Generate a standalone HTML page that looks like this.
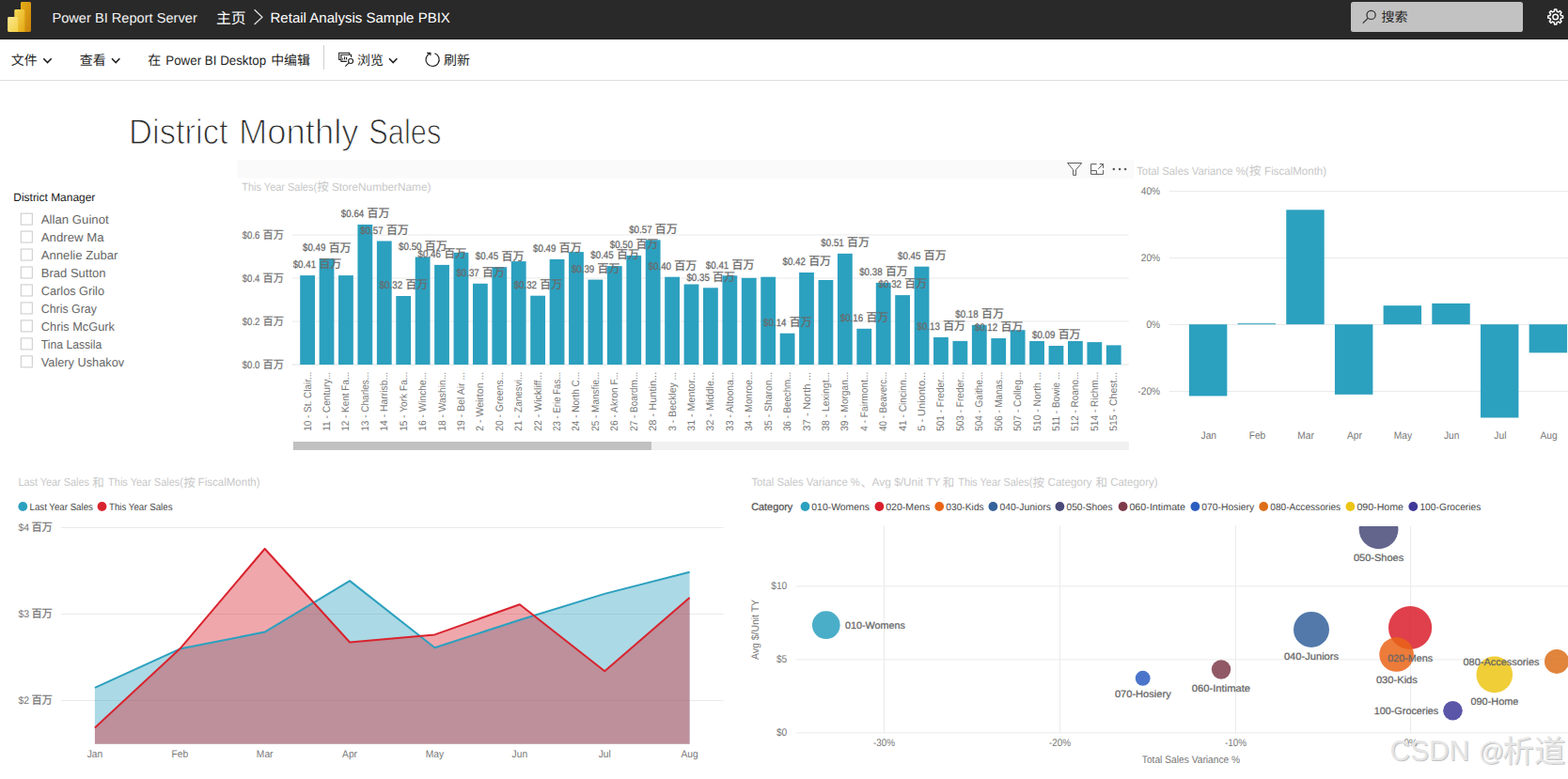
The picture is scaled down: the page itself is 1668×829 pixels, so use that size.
<!DOCTYPE html>
<html lang="zh-CN">
<head>
<meta charset="utf-8">
<title>Retail Analysis Sample PBIX - Power BI Report Server</title>
<style>
html,body{margin:0;padding:0;background:#ffffff;}
body{width:1668px;height:829px;overflow:hidden;position:relative;font-family:"Liberation Sans","Noto Sans CJK SC",sans-serif;}
svg#page{position:absolute;left:0;top:0;display:block;}
svg#page text{font-family:"Liberation Sans","Noto Sans CJK SC",sans-serif;white-space:pre;text-rendering:geometricPrecision;}
</style>
</head>
<body>
<svg id="page" width="1668" height="829" viewBox="0 0 1668 829">
<g id="header">
<rect x="0" y="0" width="1668" height="42" fill="#292929"/><rect x="0" y="41" width="1668" height="1" fill="#202020"/>
<defs>
<linearGradient id="lg1" x1="0" y1="0" x2="1" y2="1"><stop offset="0" stop-color="#e8b017"/><stop offset="1" stop-color="#c7800d"/></linearGradient>
<linearGradient id="lg2" x1="0" y1="0" x2="1" y2="1"><stop offset="0" stop-color="#f8da58"/><stop offset="1" stop-color="#e3a812"/></linearGradient>
<linearGradient id="lg3" x1="0" y1="0" x2="1" y2="1"><stop offset="0" stop-color="#fae98f"/><stop offset="1" stop-color="#f3cf45"/></linearGradient>
</defs>
<rect x="22" y="2" width="11" height="31.9" rx="1.4" fill="url(#lg1)"/>
<path d="M15.3 11.4a1.4 1.4 0 0 1 1.4-1.4h8.2a1.4 1.4 0 0 1 1.4 1.4V33.9H15.3z" fill="url(#lg2)"/>
<path d="M8.1 19.4a1.4 1.4 0 0 1 1.4-1.4h8.2a1.4 1.4 0 0 1 1.4 1.4V33.9H9.5a1.4 1.4 0 0 1-1.4-1.4z" fill="url(#lg3)"/>
<text x="55.40" y="23.70" font-size="14.5" fill="#f2f2f2" textLength="154.40" lengthAdjust="spacingAndGlyphs">Power BI Report Server</text>
<text x="230.00" y="24.60" font-size="16" fill="#ffffff" textLength="31.70" lengthAdjust="spacingAndGlyphs">主页</text>
<path d="M270.6 10.3 L279 18.2 L270.6 26" fill="none" stroke="#e6e6e6" stroke-width="1.2"/>
<text x="287.50" y="23.50" font-size="15" fill="#ffffff" textLength="191.40" lengthAdjust="spacingAndGlyphs">Retail Analysis Sample PBIX</text>
<rect x="1437" y="2" width="183" height="32" rx="2.5" fill="#c2c2c2"/>
<circle cx="1458.6" cy="15.9" r="4.6" fill="none" stroke="#2b2b2b" stroke-width="1.2"/><path d="M1455.2 19.3 L1449.8 24.7" stroke="#2b2b2b" stroke-width="1.2" fill="none"/>
<text x="1469.50" y="23.30" font-size="14" fill="#262626" textLength="28.00" lengthAdjust="spacingAndGlyphs">搜索</text>
<path d="M1653.30 12.17 L1653.57 10.08 L1655.83 10.08 L1656.10 12.17 L1657.83 12.88 L1659.50 11.60 L1661.10 13.20 L1659.82 14.87 L1660.53 16.60 L1662.62 16.87 L1662.62 19.13 L1660.53 19.40 L1659.82 21.13 L1661.10 22.80 L1659.50 24.40 L1657.83 23.12 L1656.10 23.83 L1655.83 25.92 L1653.57 25.92 L1653.30 23.83 L1651.57 23.12 L1649.90 24.40 L1648.30 22.80 L1649.58 21.13 L1648.87 19.40 L1646.78 19.13 L1646.78 16.87 L1648.87 16.60 L1649.58 14.87 L1648.30 13.20 L1649.90 11.60 L1651.57 12.88Z" fill="none" stroke="#fff" stroke-width="1.5" stroke-linejoin="round"/><circle cx="1654.70" cy="18.00" r="2.80" fill="none" stroke="#fff" stroke-width="1.5"/>
</g>
<g id="toolbar">
<rect x="0" y="85" width="1668" height="1" fill="#dedede"/>
<text x="11.70" y="69.20" font-size="14" fill="#1f1f1f" textLength="27.90" lengthAdjust="spacingAndGlyphs">文件</text>
<path d="M46.30 62.30 L50.50 66.50 L54.70 62.30" fill="none" stroke="#1f1f1f" stroke-width="1.6"/>
<text x="84.70" y="69.20" font-size="14" fill="#1f1f1f" textLength="27.90" lengthAdjust="spacingAndGlyphs">查看</text>
<path d="M119.00 62.30 L123.20 66.50 L127.40 62.30" fill="none" stroke="#1f1f1f" stroke-width="1.6"/>
<text x="157.30" y="69.20" font-size="14" fill="#1f1f1f">在</text>
<text x="176.30" y="68.80" font-size="14" fill="#1f1f1f" textLength="106.80" lengthAdjust="spacingAndGlyphs">Power BI Desktop</text>
<text x="288.20" y="69.20" font-size="14" fill="#1f1f1f" textLength="41.80" lengthAdjust="spacingAndGlyphs">中编辑</text>
<rect x="344" y="48" width="1" height="26" fill="#cfcfcf"/>
<g fill="none" stroke="#1f1f1f" stroke-width="1.1"><path d="M371.7 58V56.3H360.7V63.5H362.7"/><path d="M373.6 60.9V58.3H362.9V65.4H368.9"/><path d="M364.6 63.6V62.3M366.6 63.6V60.2M368.6 63.6V61"/><circle cx="373.1" cy="65" r="2.5"/><path d="M371.2 66.8 L367.3 70.7"/></g>
<text x="380.00" y="69.20" font-size="14" fill="#1f1f1f" textLength="27.90" lengthAdjust="spacingAndGlyphs">浏览</text>
<path d="M414.00 62.30 L418.20 66.50 L422.40 62.30" fill="none" stroke="#1f1f1f" stroke-width="1.6"/>
<g fill="none" stroke="#1f1f1f" stroke-width="1.2"><path d="M462.4 56.7 A7.1 7.1 0 1 1 457.3 56.9"/><path d="M454.2 56.4 H457.9 V59.0"/></g>
<text x="472.00" y="69.20" font-size="14" fill="#1f1f1f" textLength="27.90" lengthAdjust="spacingAndGlyphs">刷新</text>
</g>
<g id="title">
<text x="137.10" y="153.20" font-size="37.5" fill="#2a2a2a" textLength="105.60" lengthAdjust="spacingAndGlyphs" stroke="#fff" stroke-width="1.1" paint-order="fill stroke">District</text>
<text x="254.00" y="153.20" font-size="37.5" fill="#2a2a2a" textLength="127.50" lengthAdjust="spacingAndGlyphs" stroke="#fff" stroke-width="1.1" paint-order="fill stroke">Monthly</text>
<text x="392.30" y="153.20" font-size="37.5" fill="#2a2a2a" textLength="77.00" lengthAdjust="spacingAndGlyphs" stroke="#fff" stroke-width="1.1" paint-order="fill stroke">Sales</text>
</g>
<g id="slicer">
<text x="14.30" y="214.00" font-size="12" fill="#1a1a1a" textLength="87.00" lengthAdjust="spacingAndGlyphs">District Manager</text>
<rect x="22.3" y="227.10" width="12" height="12" fill="#fff" stroke="#c9c9c9" stroke-width="1"/>
<text x="43.80" y="237.90" font-size="13" fill="#666666" textLength="71.90" lengthAdjust="spacingAndGlyphs">Allan Guinot</text>
<rect x="22.3" y="246.07" width="12" height="12" fill="#fff" stroke="#c9c9c9" stroke-width="1"/>
<text x="43.80" y="256.87" font-size="13" fill="#666666" textLength="66.70" lengthAdjust="spacingAndGlyphs">Andrew Ma</text>
<rect x="22.3" y="265.04" width="12" height="12" fill="#fff" stroke="#c9c9c9" stroke-width="1"/>
<text x="43.80" y="275.84" font-size="13" fill="#666666" textLength="81.60" lengthAdjust="spacingAndGlyphs">Annelie Zubar</text>
<rect x="22.3" y="284.01" width="12" height="12" fill="#fff" stroke="#c9c9c9" stroke-width="1"/>
<text x="43.80" y="294.81" font-size="13" fill="#666666" textLength="68.70" lengthAdjust="spacingAndGlyphs">Brad Sutton</text>
<rect x="22.3" y="302.98" width="12" height="12" fill="#fff" stroke="#c9c9c9" stroke-width="1"/>
<text x="43.80" y="313.78" font-size="13" fill="#666666" textLength="67.20" lengthAdjust="spacingAndGlyphs">Carlos Grilo</text>
<rect x="22.3" y="321.95" width="12" height="12" fill="#fff" stroke="#c9c9c9" stroke-width="1"/>
<text x="43.80" y="332.75" font-size="13" fill="#666666" textLength="59.10" lengthAdjust="spacingAndGlyphs">Chris Gray</text>
<rect x="22.3" y="340.92" width="12" height="12" fill="#fff" stroke="#c9c9c9" stroke-width="1"/>
<text x="43.80" y="351.72" font-size="13" fill="#666666" textLength="78.10" lengthAdjust="spacingAndGlyphs">Chris McGurk</text>
<rect x="22.3" y="359.89" width="12" height="12" fill="#fff" stroke="#c9c9c9" stroke-width="1"/>
<text x="43.80" y="370.69" font-size="13" fill="#666666" textLength="64.50" lengthAdjust="spacingAndGlyphs">Tina Lassila</text>
<rect x="22.3" y="378.86" width="12" height="12" fill="#fff" stroke="#c9c9c9" stroke-width="1"/>
<text x="43.80" y="389.66" font-size="13" fill="#666666" textLength="88.30" lengthAdjust="spacingAndGlyphs">Valery Ushakov</text>
</g>
<g id="barchart">
<rect x="252.3" y="170" width="953.6" height="19.8" fill="#fafafa"/>
<g fill="none" stroke="#5a5a5a" stroke-width="1.0"><path d="M1135.6 173.5H1150.7L1144.6 180.6V186.4H1141.6V180.6Z"/><path d="M1166.6 174.6H1160.6V185.4H1173.6V181.1"/><path d="M1160.6 181.6H1166.4V185.4"/><path d="M1168.3 179.8 L1173.4 174.7 M1169.7 174.6H1173.6V178.9"/></g>
<g fill="#5a5a5a"><circle cx="1184.8" cy="179.9" r="1.25"/><circle cx="1191.1" cy="179.9" r="1.25"/><circle cx="1197.1" cy="179.9" r="1.25"/></g>
<text x="257.30" y="202.70" font-size="12" fill="#c8c8c8" textLength="79.80" lengthAdjust="spacingAndGlyphs">This Year Sales(</text>
<text x="337.32" y="203.40" font-size="12.5" fill="#c8c8c8">按</text>
<text x="352.90" y="202.70" font-size="12" fill="#c8c8c8" textLength="105.50" lengthAdjust="spacingAndGlyphs">StoreNumberName)</text>
<rect x="310.8" y="387.50" width="890" height="1" fill="#e2e2e2"/>
<text x="257.80" y="391.90" font-size="11" fill="#777777" textLength="18.60" lengthAdjust="spacingAndGlyphs" stroke="#777777" stroke-width="0.2">$0.0</text>
<text x="279.50" y="391.80" font-size="11.8" fill="#777777" stroke="#777777" stroke-width="0.25" textLength="22.40" lengthAdjust="spacingAndGlyphs">百万</text>
<rect x="310.8" y="341.50" width="890" height="1" fill="#eaeaea"/>
<text x="257.80" y="345.90" font-size="11" fill="#777777" textLength="18.60" lengthAdjust="spacingAndGlyphs" stroke="#777777" stroke-width="0.2">$0.2</text>
<text x="279.50" y="345.80" font-size="11.8" fill="#777777" stroke="#777777" stroke-width="0.25" textLength="22.40" lengthAdjust="spacingAndGlyphs">百万</text>
<rect x="310.8" y="295.50" width="890" height="1" fill="#eaeaea"/>
<text x="257.80" y="299.90" font-size="11" fill="#777777" textLength="18.60" lengthAdjust="spacingAndGlyphs" stroke="#777777" stroke-width="0.2">$0.4</text>
<text x="279.50" y="299.80" font-size="11.8" fill="#777777" stroke="#777777" stroke-width="0.25" textLength="22.40" lengthAdjust="spacingAndGlyphs">百万</text>
<rect x="310.8" y="249.50" width="890" height="1" fill="#eaeaea"/>
<text x="257.80" y="253.90" font-size="11" fill="#777777" textLength="18.60" lengthAdjust="spacingAndGlyphs" stroke="#777777" stroke-width="0.2">$0.6</text>
<text x="279.50" y="253.80" font-size="11.8" fill="#777777" stroke="#777777" stroke-width="0.25" textLength="22.40" lengthAdjust="spacingAndGlyphs">百万</text>
<g fill="#2ca0bf">
<rect x="319.20" y="293.10" width="15.80" height="94.90"/>
<rect x="339.62" y="275.20" width="15.80" height="112.80"/>
<rect x="360.04" y="293.10" width="15.80" height="94.90"/>
<rect x="380.46" y="239.00" width="15.80" height="149.00"/>
<rect x="400.88" y="256.50" width="15.80" height="131.50"/>
<rect x="421.30" y="315.00" width="15.80" height="73.00"/>
<rect x="441.72" y="273.50" width="15.80" height="114.50"/>
<rect x="462.14" y="281.90" width="15.80" height="106.10"/>
<rect x="482.56" y="268.80" width="15.80" height="119.20"/>
<rect x="502.98" y="301.80" width="15.80" height="86.20"/>
<rect x="523.40" y="284.20" width="15.80" height="103.80"/>
<rect x="543.82" y="278.10" width="15.80" height="109.90"/>
<rect x="564.24" y="314.70" width="15.80" height="73.30"/>
<rect x="584.66" y="275.90" width="15.80" height="112.10"/>
<rect x="605.08" y="268.10" width="15.80" height="119.90"/>
<rect x="625.50" y="297.60" width="15.80" height="90.40"/>
<rect x="645.92" y="283.10" width="15.80" height="104.90"/>
<rect x="666.34" y="271.90" width="15.80" height="116.10"/>
<rect x="686.76" y="255.40" width="15.80" height="132.60"/>
<rect x="707.18" y="294.70" width="15.80" height="93.30"/>
<rect x="727.60" y="302.50" width="15.80" height="85.50"/>
<rect x="748.02" y="306.30" width="15.80" height="81.70"/>
<rect x="768.44" y="293.30" width="15.80" height="94.70"/>
<rect x="788.86" y="295.80" width="15.80" height="92.20"/>
<rect x="809.28" y="294.70" width="15.80" height="93.30"/>
<rect x="829.70" y="354.70" width="15.80" height="33.30"/>
<rect x="850.12" y="290.00" width="15.80" height="98.00"/>
<rect x="870.54" y="298.00" width="15.80" height="90.00"/>
<rect x="890.96" y="269.90" width="15.80" height="118.10"/>
<rect x="911.38" y="349.80" width="15.80" height="38.20"/>
<rect x="931.80" y="300.90" width="15.80" height="87.10"/>
<rect x="952.22" y="314.10" width="15.80" height="73.90"/>
<rect x="972.64" y="283.70" width="15.80" height="104.30"/>
<rect x="993.06" y="358.90" width="15.80" height="29.10"/>
<rect x="1013.48" y="362.90" width="15.80" height="25.10"/>
<rect x="1033.90" y="345.80" width="15.80" height="42.20"/>
<rect x="1054.32" y="360.00" width="15.80" height="28.00"/>
<rect x="1074.74" y="351.20" width="15.80" height="36.80"/>
<rect x="1095.16" y="363.00" width="15.80" height="25.00"/>
<rect x="1115.58" y="368.00" width="15.80" height="20.00"/>
<rect x="1136.00" y="363.00" width="15.80" height="25.00"/>
<rect x="1156.42" y="364.10" width="15.80" height="23.90"/>
<rect x="1176.84" y="367.40" width="15.80" height="20.60"/>
</g>
<text x="311.70" y="285.30" font-size="11" fill="#6a6a6a" textLength="24.40" lengthAdjust="spacingAndGlyphs" stroke="#6a6a6a" stroke-width="0.25">$0.41</text>
<text x="339.40" y="285.40" font-size="12.5" fill="#6a6a6a" stroke="#6a6a6a" stroke-width="0.3" textLength="23.80" lengthAdjust="spacingAndGlyphs">百万</text>
<text x="322.02" y="267.40" font-size="11" fill="#6a6a6a" textLength="24.40" lengthAdjust="spacingAndGlyphs" stroke="#6a6a6a" stroke-width="0.25">$0.49</text>
<text x="349.72" y="267.50" font-size="12.5" fill="#6a6a6a" stroke="#6a6a6a" stroke-width="0.3" textLength="23.80" lengthAdjust="spacingAndGlyphs">百万</text>
<text x="362.86" y="231.20" font-size="11" fill="#6a6a6a" textLength="24.40" lengthAdjust="spacingAndGlyphs" stroke="#6a6a6a" stroke-width="0.25">$0.64</text>
<text x="390.56" y="231.30" font-size="12.5" fill="#6a6a6a" stroke="#6a6a6a" stroke-width="0.3" textLength="23.80" lengthAdjust="spacingAndGlyphs">百万</text>
<text x="383.28" y="248.70" font-size="11" fill="#6a6a6a" textLength="24.40" lengthAdjust="spacingAndGlyphs" stroke="#6a6a6a" stroke-width="0.25">$0.57</text>
<text x="410.98" y="248.80" font-size="12.5" fill="#6a6a6a" stroke="#6a6a6a" stroke-width="0.3" textLength="23.80" lengthAdjust="spacingAndGlyphs">百万</text>
<text x="403.70" y="307.20" font-size="11" fill="#6a6a6a" textLength="24.40" lengthAdjust="spacingAndGlyphs" stroke="#6a6a6a" stroke-width="0.25">$0.32</text>
<text x="431.40" y="307.30" font-size="12.5" fill="#6a6a6a" stroke="#6a6a6a" stroke-width="0.3" textLength="23.80" lengthAdjust="spacingAndGlyphs">百万</text>
<text x="424.12" y="265.70" font-size="11" fill="#6a6a6a" textLength="24.40" lengthAdjust="spacingAndGlyphs" stroke="#6a6a6a" stroke-width="0.25">$0.50</text>
<text x="451.82" y="265.80" font-size="12.5" fill="#6a6a6a" stroke="#6a6a6a" stroke-width="0.3" textLength="23.80" lengthAdjust="spacingAndGlyphs">百万</text>
<text x="444.54" y="274.10" font-size="11" fill="#6a6a6a" textLength="24.40" lengthAdjust="spacingAndGlyphs" stroke="#6a6a6a" stroke-width="0.25">$0.46</text>
<text x="472.24" y="274.20" font-size="12.5" fill="#6a6a6a" stroke="#6a6a6a" stroke-width="0.3" textLength="23.80" lengthAdjust="spacingAndGlyphs">百万</text>
<text x="485.38" y="294.00" font-size="11" fill="#6a6a6a" textLength="24.40" lengthAdjust="spacingAndGlyphs" stroke="#6a6a6a" stroke-width="0.25">$0.37</text>
<text x="513.08" y="294.10" font-size="12.5" fill="#6a6a6a" stroke="#6a6a6a" stroke-width="0.3" textLength="23.80" lengthAdjust="spacingAndGlyphs">百万</text>
<text x="505.80" y="276.40" font-size="11" fill="#6a6a6a" textLength="24.40" lengthAdjust="spacingAndGlyphs" stroke="#6a6a6a" stroke-width="0.25">$0.45</text>
<text x="533.50" y="276.50" font-size="12.5" fill="#6a6a6a" stroke="#6a6a6a" stroke-width="0.3" textLength="23.80" lengthAdjust="spacingAndGlyphs">百万</text>
<text x="546.64" y="306.90" font-size="11" fill="#6a6a6a" textLength="24.40" lengthAdjust="spacingAndGlyphs" stroke="#6a6a6a" stroke-width="0.25">$0.32</text>
<text x="574.34" y="307.00" font-size="12.5" fill="#6a6a6a" stroke="#6a6a6a" stroke-width="0.3" textLength="23.80" lengthAdjust="spacingAndGlyphs">百万</text>
<text x="567.06" y="268.10" font-size="11" fill="#6a6a6a" textLength="24.40" lengthAdjust="spacingAndGlyphs" stroke="#6a6a6a" stroke-width="0.25">$0.49</text>
<text x="594.76" y="268.20" font-size="12.5" fill="#6a6a6a" stroke="#6a6a6a" stroke-width="0.3" textLength="23.80" lengthAdjust="spacingAndGlyphs">百万</text>
<text x="607.90" y="289.80" font-size="11" fill="#6a6a6a" textLength="24.40" lengthAdjust="spacingAndGlyphs" stroke="#6a6a6a" stroke-width="0.25">$0.39</text>
<text x="635.60" y="289.90" font-size="12.5" fill="#6a6a6a" stroke="#6a6a6a" stroke-width="0.3" textLength="23.80" lengthAdjust="spacingAndGlyphs">百万</text>
<text x="628.32" y="275.30" font-size="11" fill="#6a6a6a" textLength="24.40" lengthAdjust="spacingAndGlyphs" stroke="#6a6a6a" stroke-width="0.25">$0.45</text>
<text x="656.02" y="275.40" font-size="12.5" fill="#6a6a6a" stroke="#6a6a6a" stroke-width="0.3" textLength="23.80" lengthAdjust="spacingAndGlyphs">百万</text>
<text x="648.74" y="264.10" font-size="11" fill="#6a6a6a" textLength="24.40" lengthAdjust="spacingAndGlyphs" stroke="#6a6a6a" stroke-width="0.25">$0.50</text>
<text x="676.44" y="264.20" font-size="12.5" fill="#6a6a6a" stroke="#6a6a6a" stroke-width="0.3" textLength="23.80" lengthAdjust="spacingAndGlyphs">百万</text>
<text x="669.16" y="247.60" font-size="11" fill="#6a6a6a" textLength="24.40" lengthAdjust="spacingAndGlyphs" stroke="#6a6a6a" stroke-width="0.25">$0.57</text>
<text x="696.86" y="247.70" font-size="12.5" fill="#6a6a6a" stroke="#6a6a6a" stroke-width="0.3" textLength="23.80" lengthAdjust="spacingAndGlyphs">百万</text>
<text x="689.58" y="286.90" font-size="11" fill="#6a6a6a" textLength="24.40" lengthAdjust="spacingAndGlyphs" stroke="#6a6a6a" stroke-width="0.25">$0.40</text>
<text x="717.28" y="287.00" font-size="12.5" fill="#6a6a6a" stroke="#6a6a6a" stroke-width="0.3" textLength="23.80" lengthAdjust="spacingAndGlyphs">百万</text>
<text x="730.42" y="298.50" font-size="11" fill="#6a6a6a" textLength="24.40" lengthAdjust="spacingAndGlyphs" stroke="#6a6a6a" stroke-width="0.25">$0.35</text>
<text x="758.12" y="298.60" font-size="12.5" fill="#6a6a6a" stroke="#6a6a6a" stroke-width="0.3" textLength="23.80" lengthAdjust="spacingAndGlyphs">百万</text>
<text x="750.84" y="285.50" font-size="11" fill="#6a6a6a" textLength="24.40" lengthAdjust="spacingAndGlyphs" stroke="#6a6a6a" stroke-width="0.25">$0.41</text>
<text x="778.54" y="285.60" font-size="12.5" fill="#6a6a6a" stroke="#6a6a6a" stroke-width="0.3" textLength="23.80" lengthAdjust="spacingAndGlyphs">百万</text>
<text x="812.10" y="346.90" font-size="11" fill="#6a6a6a" textLength="24.40" lengthAdjust="spacingAndGlyphs" stroke="#6a6a6a" stroke-width="0.25">$0.14</text>
<text x="839.80" y="347.00" font-size="12.5" fill="#6a6a6a" stroke="#6a6a6a" stroke-width="0.3" textLength="23.80" lengthAdjust="spacingAndGlyphs">百万</text>
<text x="832.52" y="282.20" font-size="11" fill="#6a6a6a" textLength="24.40" lengthAdjust="spacingAndGlyphs" stroke="#6a6a6a" stroke-width="0.25">$0.42</text>
<text x="860.22" y="282.30" font-size="12.5" fill="#6a6a6a" stroke="#6a6a6a" stroke-width="0.3" textLength="23.80" lengthAdjust="spacingAndGlyphs">百万</text>
<text x="873.36" y="262.10" font-size="11" fill="#6a6a6a" textLength="24.40" lengthAdjust="spacingAndGlyphs" stroke="#6a6a6a" stroke-width="0.25">$0.51</text>
<text x="901.06" y="262.20" font-size="12.5" fill="#6a6a6a" stroke="#6a6a6a" stroke-width="0.3" textLength="23.80" lengthAdjust="spacingAndGlyphs">百万</text>
<text x="893.78" y="342.00" font-size="11" fill="#6a6a6a" textLength="24.40" lengthAdjust="spacingAndGlyphs" stroke="#6a6a6a" stroke-width="0.25">$0.16</text>
<text x="921.48" y="342.10" font-size="12.5" fill="#6a6a6a" stroke="#6a6a6a" stroke-width="0.3" textLength="23.80" lengthAdjust="spacingAndGlyphs">百万</text>
<text x="914.20" y="293.10" font-size="11" fill="#6a6a6a" textLength="24.40" lengthAdjust="spacingAndGlyphs" stroke="#6a6a6a" stroke-width="0.25">$0.38</text>
<text x="941.90" y="293.20" font-size="12.5" fill="#6a6a6a" stroke="#6a6a6a" stroke-width="0.3" textLength="23.80" lengthAdjust="spacingAndGlyphs">百万</text>
<text x="934.62" y="306.30" font-size="11" fill="#6a6a6a" textLength="24.40" lengthAdjust="spacingAndGlyphs" stroke="#6a6a6a" stroke-width="0.25">$0.32</text>
<text x="962.32" y="306.40" font-size="12.5" fill="#6a6a6a" stroke="#6a6a6a" stroke-width="0.3" textLength="23.80" lengthAdjust="spacingAndGlyphs">百万</text>
<text x="955.04" y="275.90" font-size="11" fill="#6a6a6a" textLength="24.40" lengthAdjust="spacingAndGlyphs" stroke="#6a6a6a" stroke-width="0.25">$0.45</text>
<text x="982.74" y="276.00" font-size="12.5" fill="#6a6a6a" stroke="#6a6a6a" stroke-width="0.3" textLength="23.80" lengthAdjust="spacingAndGlyphs">百万</text>
<text x="975.46" y="351.10" font-size="11" fill="#6a6a6a" textLength="24.40" lengthAdjust="spacingAndGlyphs" stroke="#6a6a6a" stroke-width="0.25">$0.13</text>
<text x="1003.16" y="351.20" font-size="12.5" fill="#6a6a6a" stroke="#6a6a6a" stroke-width="0.3" textLength="23.80" lengthAdjust="spacingAndGlyphs">百万</text>
<text x="1016.30" y="338.00" font-size="11" fill="#6a6a6a" textLength="24.40" lengthAdjust="spacingAndGlyphs" stroke="#6a6a6a" stroke-width="0.25">$0.18</text>
<text x="1044.00" y="338.10" font-size="12.5" fill="#6a6a6a" stroke="#6a6a6a" stroke-width="0.3" textLength="23.80" lengthAdjust="spacingAndGlyphs">百万</text>
<text x="1036.72" y="352.20" font-size="11" fill="#6a6a6a" textLength="24.40" lengthAdjust="spacingAndGlyphs" stroke="#6a6a6a" stroke-width="0.25">$0.12</text>
<text x="1064.42" y="352.30" font-size="12.5" fill="#6a6a6a" stroke="#6a6a6a" stroke-width="0.3" textLength="23.80" lengthAdjust="spacingAndGlyphs">百万</text>
<text x="1097.98" y="360.20" font-size="11" fill="#6a6a6a" textLength="24.40" lengthAdjust="spacingAndGlyphs" stroke="#6a6a6a" stroke-width="0.25">$0.09</text>
<text x="1125.68" y="360.30" font-size="12.5" fill="#6a6a6a" stroke="#6a6a6a" stroke-width="0.3" textLength="23.80" lengthAdjust="spacingAndGlyphs">百万</text>
<text transform="translate(330.60 458.8) rotate(-90)" font-size="11" fill="#777777" textLength="63.0" lengthAdjust="spacingAndGlyphs">10 - St. Clair...</text>
<text transform="translate(351.02 458.8) rotate(-90)" font-size="11" fill="#777777" textLength="63.0" lengthAdjust="spacingAndGlyphs">11 - Century...</text>
<text transform="translate(371.44 458.8) rotate(-90)" font-size="11" fill="#777777" textLength="63.0" lengthAdjust="spacingAndGlyphs">12 - Kent Fa...</text>
<text transform="translate(391.86 458.8) rotate(-90)" font-size="11" fill="#777777" textLength="63.0" lengthAdjust="spacingAndGlyphs">13 - Charles...</text>
<text transform="translate(412.28 458.8) rotate(-90)" font-size="11" fill="#777777" textLength="63.0" lengthAdjust="spacingAndGlyphs">14 - Harrisb...</text>
<text transform="translate(432.70 458.8) rotate(-90)" font-size="11" fill="#777777" textLength="63.0" lengthAdjust="spacingAndGlyphs">15 - York Fa...</text>
<text transform="translate(453.12 458.8) rotate(-90)" font-size="11" fill="#777777" textLength="63.0" lengthAdjust="spacingAndGlyphs">16 - Winche...</text>
<text transform="translate(473.54 458.8) rotate(-90)" font-size="11" fill="#777777" textLength="63.0" lengthAdjust="spacingAndGlyphs">18 - Washin...</text>
<text transform="translate(493.96 458.8) rotate(-90)" font-size="11" fill="#777777" textLength="63.0" lengthAdjust="spacingAndGlyphs">19 - Bel Air ...</text>
<text transform="translate(514.38 458.8) rotate(-90)" font-size="11" fill="#777777" textLength="63.0" lengthAdjust="spacingAndGlyphs">2 - Weirton ...</text>
<text transform="translate(534.80 458.8) rotate(-90)" font-size="11" fill="#777777" textLength="63.0" lengthAdjust="spacingAndGlyphs">20 - Greens...</text>
<text transform="translate(555.22 458.8) rotate(-90)" font-size="11" fill="#777777" textLength="63.0" lengthAdjust="spacingAndGlyphs">21 - Zanesvi...</text>
<text transform="translate(575.64 458.8) rotate(-90)" font-size="11" fill="#777777" textLength="63.0" lengthAdjust="spacingAndGlyphs">22 - Wickliff...</text>
<text transform="translate(596.06 458.8) rotate(-90)" font-size="11" fill="#777777" textLength="63.0" lengthAdjust="spacingAndGlyphs">23 - Erie Fas...</text>
<text transform="translate(616.48 458.8) rotate(-90)" font-size="11" fill="#777777" textLength="63.0" lengthAdjust="spacingAndGlyphs">24 - North C...</text>
<text transform="translate(636.90 458.8) rotate(-90)" font-size="11" fill="#777777" textLength="63.0" lengthAdjust="spacingAndGlyphs">25 - Mansfie...</text>
<text transform="translate(657.32 458.8) rotate(-90)" font-size="11" fill="#777777" textLength="63.0" lengthAdjust="spacingAndGlyphs">26 - Akron F...</text>
<text transform="translate(677.74 458.8) rotate(-90)" font-size="11" fill="#777777" textLength="63.0" lengthAdjust="spacingAndGlyphs">27 - Boardm...</text>
<text transform="translate(698.16 458.8) rotate(-90)" font-size="11" fill="#777777" textLength="63.0" lengthAdjust="spacingAndGlyphs">28 - Huntin...</text>
<text transform="translate(718.58 458.8) rotate(-90)" font-size="11" fill="#777777" textLength="63.0" lengthAdjust="spacingAndGlyphs">3 - Beckley ...</text>
<text transform="translate(739.00 458.8) rotate(-90)" font-size="11" fill="#777777" textLength="63.0" lengthAdjust="spacingAndGlyphs">31 - Mentor...</text>
<text transform="translate(759.42 458.8) rotate(-90)" font-size="11" fill="#777777" textLength="63.0" lengthAdjust="spacingAndGlyphs">32 - Middle...</text>
<text transform="translate(779.84 458.8) rotate(-90)" font-size="11" fill="#777777" textLength="63.0" lengthAdjust="spacingAndGlyphs">33 - Altoona...</text>
<text transform="translate(800.26 458.8) rotate(-90)" font-size="11" fill="#777777" textLength="63.0" lengthAdjust="spacingAndGlyphs">34 - Monroe...</text>
<text transform="translate(820.68 458.8) rotate(-90)" font-size="11" fill="#777777" textLength="63.0" lengthAdjust="spacingAndGlyphs">35 - Sharon...</text>
<text transform="translate(841.10 458.8) rotate(-90)" font-size="11" fill="#777777" textLength="63.0" lengthAdjust="spacingAndGlyphs">36 - Beechm...</text>
<text transform="translate(861.52 458.8) rotate(-90)" font-size="11" fill="#777777" textLength="63.0" lengthAdjust="spacingAndGlyphs">37 - North ...</text>
<text transform="translate(881.94 458.8) rotate(-90)" font-size="11" fill="#777777" textLength="63.0" lengthAdjust="spacingAndGlyphs">38 - Lexingt...</text>
<text transform="translate(902.36 458.8) rotate(-90)" font-size="11" fill="#777777" textLength="63.0" lengthAdjust="spacingAndGlyphs">39 - Morgan...</text>
<text transform="translate(922.78 458.8) rotate(-90)" font-size="11" fill="#777777" textLength="63.0" lengthAdjust="spacingAndGlyphs">4 - Fairmont...</text>
<text transform="translate(943.20 458.8) rotate(-90)" font-size="11" fill="#777777" textLength="63.0" lengthAdjust="spacingAndGlyphs">40 - Beaverc...</text>
<text transform="translate(963.62 458.8) rotate(-90)" font-size="11" fill="#777777" textLength="63.0" lengthAdjust="spacingAndGlyphs">41 - Cincinn...</text>
<text transform="translate(984.04 458.8) rotate(-90)" font-size="11" fill="#777777" textLength="63.0" lengthAdjust="spacingAndGlyphs">5 - Unionto...</text>
<text transform="translate(1004.46 458.8) rotate(-90)" font-size="11" fill="#777777" textLength="63.0" lengthAdjust="spacingAndGlyphs">501 - Freder...</text>
<text transform="translate(1024.88 458.8) rotate(-90)" font-size="11" fill="#777777" textLength="63.0" lengthAdjust="spacingAndGlyphs">503 - Freder...</text>
<text transform="translate(1045.30 458.8) rotate(-90)" font-size="11" fill="#777777" textLength="63.0" lengthAdjust="spacingAndGlyphs">504 - Gaithe...</text>
<text transform="translate(1065.72 458.8) rotate(-90)" font-size="11" fill="#777777" textLength="63.0" lengthAdjust="spacingAndGlyphs">506 - Manas...</text>
<text transform="translate(1086.14 458.8) rotate(-90)" font-size="11" fill="#777777" textLength="63.0" lengthAdjust="spacingAndGlyphs">507 - Colleg...</text>
<text transform="translate(1106.56 458.8) rotate(-90)" font-size="11" fill="#777777" textLength="63.0" lengthAdjust="spacingAndGlyphs">510 - North ...</text>
<text transform="translate(1126.98 458.8) rotate(-90)" font-size="11" fill="#777777" textLength="63.0" lengthAdjust="spacingAndGlyphs">511 - Bowie ...</text>
<text transform="translate(1147.40 458.8) rotate(-90)" font-size="11" fill="#777777" textLength="63.0" lengthAdjust="spacingAndGlyphs">512 - Roano...</text>
<text transform="translate(1167.82 458.8) rotate(-90)" font-size="11" fill="#777777" textLength="63.0" lengthAdjust="spacingAndGlyphs">514 - Richm...</text>
<text transform="translate(1188.24 458.8) rotate(-90)" font-size="11" fill="#777777" textLength="63.0" lengthAdjust="spacingAndGlyphs">515 - Chest...</text>
<rect x="311.9" y="470" width="889" height="9" fill="#f1f1f1"/>
<rect x="311.9" y="470" width="381.1" height="9" fill="#c1c1c1"/>
</g>
<g id="varchart">
<text x="1209.20" y="185.70" font-size="12" fill="#c8c8c8" textLength="119.40" lengthAdjust="spacingAndGlyphs">Total Sales Variance %(</text>
<text x="1328.92" y="186.40" font-size="12.5" fill="#c8c8c8">按</text>
<text x="1345.10" y="185.70" font-size="12" fill="#c8c8c8" textLength="66.00" lengthAdjust="spacingAndGlyphs">FiscalMonth)</text>
<rect x="1244" y="203.00" width="424" height="1" fill="#eaeaea"/>
<text x="1234.20" y="206.90" font-size="11" fill="#777777" textLength="20.48" lengthAdjust="spacingAndGlyphs" text-anchor="end">40%</text>
<rect x="1244" y="274.00" width="424" height="1" fill="#eaeaea"/>
<text x="1234.20" y="277.90" font-size="11" fill="#777777" textLength="20.48" lengthAdjust="spacingAndGlyphs" text-anchor="end">20%</text>
<rect x="1244" y="345.00" width="424" height="1" fill="#eaeaea"/>
<text x="1234.20" y="348.90" font-size="11" fill="#777777" textLength="14.79" lengthAdjust="spacingAndGlyphs" text-anchor="end">0%</text>
<rect x="1244" y="416.00" width="424" height="1" fill="#eaeaea"/>
<text x="1234.20" y="419.90" font-size="11" fill="#777777" textLength="23.88" lengthAdjust="spacingAndGlyphs" text-anchor="end">-20%</text>
<g fill="#2ca0bf">
<rect x="1264.90" y="345.20" width="40.45" height="76.20"/>
<rect x="1316.58" y="344.20" width="40.45" height="1.00"/>
<rect x="1368.26" y="223.30" width="40.45" height="121.90"/>
<rect x="1419.94" y="345.20" width="40.45" height="74.60"/>
<rect x="1471.62" y="325.20" width="40.45" height="20.00"/>
<rect x="1523.30" y="322.90" width="40.45" height="22.30"/>
<rect x="1574.98" y="345.20" width="40.45" height="99.30"/>
<rect x="1626.66" y="345.20" width="40.45" height="30.20"/>
</g>
<text x="1285.80" y="467.30" font-size="11" fill="#777777" textLength="16.49" lengthAdjust="spacingAndGlyphs" text-anchor="middle">Jan</text>
<text x="1337.48" y="467.30" font-size="11" fill="#777777" textLength="17.63" lengthAdjust="spacingAndGlyphs" text-anchor="middle">Feb</text>
<text x="1389.16" y="467.30" font-size="11" fill="#777777" textLength="17.62" lengthAdjust="spacingAndGlyphs" text-anchor="middle">Mar</text>
<text x="1440.84" y="467.30" font-size="11" fill="#777777" textLength="15.92" lengthAdjust="spacingAndGlyphs" text-anchor="middle">Apr</text>
<text x="1492.52" y="467.30" font-size="11" fill="#777777" textLength="19.33" lengthAdjust="spacingAndGlyphs" text-anchor="middle">May</text>
<text x="1544.20" y="467.30" font-size="11" fill="#777777" textLength="16.49" lengthAdjust="spacingAndGlyphs" text-anchor="middle">Jun</text>
<text x="1595.88" y="467.30" font-size="11" fill="#777777" textLength="13.08" lengthAdjust="spacingAndGlyphs" text-anchor="middle">Jul</text>
<text x="1647.56" y="467.30" font-size="11" fill="#777777" textLength="18.20" lengthAdjust="spacingAndGlyphs" text-anchor="middle">Aug</text>
</g>
<g id="areachart">
<text x="19.40" y="516.80" font-size="12" fill="#c8c8c8" textLength="75.50" lengthAdjust="spacingAndGlyphs">Last Year Sales</text>
<text x="98.27" y="517.50" font-size="12.5" fill="#c8c8c8">和</text>
<text x="115.10" y="516.80" font-size="12" fill="#c8c8c8" textLength="79.80" lengthAdjust="spacingAndGlyphs">This Year Sales(</text>
<text x="195.32" y="517.50" font-size="12.5" fill="#c8c8c8">按</text>
<text x="210.60" y="516.80" font-size="12" fill="#c8c8c8" textLength="66.00" lengthAdjust="spacingAndGlyphs">FiscalMonth)</text>
<circle cx="24.3" cy="539" r="4.9" fill="#2ca0bf"/>
<text x="31.50" y="542.70" font-size="10.5" fill="#4a4a4a" textLength="67.40" lengthAdjust="spacingAndGlyphs">Last Year Sales</text>
<circle cx="108.5" cy="539" r="4.9" fill="#d9232e"/>
<text x="116.00" y="542.70" font-size="10.5" fill="#4a4a4a" textLength="67.50" lengthAdjust="spacingAndGlyphs">This Year Sales</text>
<rect x="64.9" y="561.00" width="704.7" height="1" fill="#eaeaea"/>
<text x="19.40" y="565.20" font-size="11" fill="#777777" textLength="11.60" lengthAdjust="spacingAndGlyphs">$4</text>
<text x="33.40" y="565.00" font-size="11.8" fill="#777777" stroke="#777777" stroke-width="0.25" textLength="22.40" lengthAdjust="spacingAndGlyphs">百万</text>
<rect x="64.9" y="653.00" width="704.7" height="1" fill="#eaeaea"/>
<text x="19.40" y="657.20" font-size="11" fill="#777777" textLength="11.60" lengthAdjust="spacingAndGlyphs">$3</text>
<text x="33.40" y="657.00" font-size="11.8" fill="#777777" stroke="#777777" stroke-width="0.25" textLength="22.40" lengthAdjust="spacingAndGlyphs">百万</text>
<rect x="64.9" y="745.00" width="704.7" height="1" fill="#eaeaea"/>
<text x="19.40" y="749.20" font-size="11" fill="#777777" textLength="11.60" lengthAdjust="spacingAndGlyphs">$2</text>
<text x="33.40" y="749.00" font-size="11.8" fill="#777777" stroke="#777777" stroke-width="0.25" textLength="22.40" lengthAdjust="spacingAndGlyphs">百万</text>
<polygon points="100.90,731.80 191.29,690.60 281.68,672.60 372.07,618.10 462.46,689.20 552.85,659.80 643.24,631.90 733.63,608.70 733.63,791.80 100.90,791.80" fill="#2ca0bf" fill-opacity="0.4"/>
<polygon points="100.90,774.40 191.29,690.60 281.68,584.00 372.07,683.50 462.46,675.40 552.85,643.20 643.24,714.30 733.63,636.10 733.63,791.80 100.90,791.80" fill="#d9232e" fill-opacity="0.4"/>
<polyline points="100.90,731.80 191.29,690.60 281.68,672.60 372.07,618.10 462.46,689.20 552.85,659.80 643.24,631.90 733.63,608.70" fill="none" stroke="#2ca0bf" stroke-width="2" stroke-linejoin="round"/>
<polyline points="100.90,774.40 191.29,690.60 281.68,584.00 372.07,683.50 462.46,675.40 552.85,643.20 643.24,714.30 733.63,636.10" fill="none" stroke="#d9232e" stroke-width="2" stroke-linejoin="round"/>
<text x="100.90" y="805.80" font-size="11" fill="#777777" textLength="16.49" lengthAdjust="spacingAndGlyphs" text-anchor="middle">Jan</text>
<text x="191.29" y="805.80" font-size="11" fill="#777777" textLength="17.63" lengthAdjust="spacingAndGlyphs" text-anchor="middle">Feb</text>
<text x="281.68" y="805.80" font-size="11" fill="#777777" textLength="17.62" lengthAdjust="spacingAndGlyphs" text-anchor="middle">Mar</text>
<text x="372.07" y="805.80" font-size="11" fill="#777777" textLength="15.92" lengthAdjust="spacingAndGlyphs" text-anchor="middle">Apr</text>
<text x="462.46" y="805.80" font-size="11" fill="#777777" textLength="19.33" lengthAdjust="spacingAndGlyphs" text-anchor="middle">May</text>
<text x="552.85" y="805.80" font-size="11" fill="#777777" textLength="16.49" lengthAdjust="spacingAndGlyphs" text-anchor="middle">Jun</text>
<text x="643.24" y="805.80" font-size="11" fill="#777777" textLength="13.08" lengthAdjust="spacingAndGlyphs" text-anchor="middle">Jul</text>
<text x="733.63" y="805.80" font-size="11" fill="#777777" textLength="18.20" lengthAdjust="spacingAndGlyphs" text-anchor="middle">Aug</text>
</g>
<g id="scatter">
<text x="799.40" y="516.80" font-size="12" fill="#c8c8c8" textLength="115.50" lengthAdjust="spacingAndGlyphs">Total Sales Variance %</text>
<text x="915.60" y="517.50" font-size="12.5" fill="#c8c8c8">、</text>
<text x="927.60" y="516.80" font-size="12" fill="#c8c8c8" textLength="72.80" lengthAdjust="spacingAndGlyphs">Avg $/Unit TY</text>
<text x="1002.77" y="517.50" font-size="12.5" fill="#c8c8c8">和</text>
<text x="1019.30" y="516.80" font-size="12" fill="#c8c8c8" textLength="79.00" lengthAdjust="spacingAndGlyphs">This Year Sales(</text>
<text x="1098.53" y="517.50" font-size="12.5" fill="#c8c8c8">按</text>
<text x="1114.50" y="516.80" font-size="12" fill="#c8c8c8" textLength="47.20" lengthAdjust="spacingAndGlyphs">Category</text>
<text x="1165.47" y="517.50" font-size="12.5" fill="#c8c8c8">和</text>
<text x="1181.20" y="516.80" font-size="12" fill="#c8c8c8" textLength="50.40" lengthAdjust="spacingAndGlyphs">Category)</text>
<text x="799.20" y="542.80" font-size="11" fill="#585858" textLength="44.10" lengthAdjust="spacingAndGlyphs" stroke="#585858" stroke-width="0.3">Category</text>
<circle cx="856.5" cy="539" r="4.9" fill="#2ca0bf"/>
<text x="863.30" y="542.70" font-size="10.5" fill="#4a4a4a" textLength="61.80" lengthAdjust="spacingAndGlyphs">010-Womens</text>
<circle cx="935.4" cy="539" r="4.9" fill="#d91e2b"/>
<text x="942.20" y="542.70" font-size="10.5" fill="#4a4a4a" textLength="47.00" lengthAdjust="spacingAndGlyphs">020-Mens</text>
<circle cx="999.2" cy="539" r="4.9" fill="#ea6417"/>
<text x="1006.30" y="542.70" font-size="10.5" fill="#4a4a4a" textLength="40.40" lengthAdjust="spacingAndGlyphs">030-Kids</text>
<circle cx="1056.4" cy="539" r="4.9" fill="#34629b"/>
<text x="1063.50" y="542.70" font-size="10.5" fill="#4a4a4a" textLength="54.40" lengthAdjust="spacingAndGlyphs">040-Juniors</text>
<circle cx="1127.4" cy="539" r="4.9" fill="#484a78"/>
<text x="1134.50" y="542.70" font-size="10.5" fill="#4a4a4a" textLength="49.10" lengthAdjust="spacingAndGlyphs">050-Shoes</text>
<circle cx="1194.6" cy="539" r="4.9" fill="#7e3b4a"/>
<text x="1201.40" y="542.70" font-size="10.5" fill="#4a4a4a" textLength="59.70" lengthAdjust="spacingAndGlyphs">060-Intimate</text>
<circle cx="1271.4" cy="539" r="4.9" fill="#2b5dc1"/>
<text x="1278.20" y="542.70" font-size="10.5" fill="#4a4a4a" textLength="55.90" lengthAdjust="spacingAndGlyphs">070-Hosiery</text>
<circle cx="1344.2" cy="539" r="4.9" fill="#dc6e1a"/>
<text x="1351.30" y="542.70" font-size="10.5" fill="#4a4a4a" textLength="74.80" lengthAdjust="spacingAndGlyphs">080-Accessories</text>
<circle cx="1436.4" cy="539" r="4.9" fill="#edc515"/>
<text x="1443.40" y="542.70" font-size="10.5" fill="#4a4a4a" textLength="49.60" lengthAdjust="spacingAndGlyphs">090-Home</text>
<circle cx="1503.3" cy="539" r="4.9" fill="#3f3899"/>
<text x="1510.40" y="542.70" font-size="10.5" fill="#4a4a4a" textLength="65.00" lengthAdjust="spacingAndGlyphs">100-Groceries</text>
<rect x="846.5" y="623.40" width="821.5" height="1" fill="#eaeaea"/>
<text x="837.30" y="627.20" font-size="11" fill="#777777" textLength="17.07" lengthAdjust="spacingAndGlyphs" text-anchor="end">$10</text>
<rect x="846.5" y="701.40" width="821.5" height="1" fill="#eaeaea"/>
<text x="837.30" y="705.20" font-size="11" fill="#777777" textLength="11.38" lengthAdjust="spacingAndGlyphs" text-anchor="end">$5</text>
<rect x="846.5" y="779.40" width="821.5" height="1" fill="#eaeaea"/>
<text x="837.30" y="783.20" font-size="11" fill="#777777" textLength="11.38" lengthAdjust="spacingAndGlyphs" text-anchor="end">$0</text>
<rect x="940.00" y="559.4" width="1" height="221.0" fill="#eaeaea"/>
<text x="940.50" y="794.00" font-size="11" fill="#777777" textLength="23.11" lengthAdjust="spacingAndGlyphs" text-anchor="middle">-30%</text>
<rect x="1127.00" y="559.4" width="1" height="221.0" fill="#eaeaea"/>
<text x="1127.50" y="794.00" font-size="11" fill="#777777" textLength="23.11" lengthAdjust="spacingAndGlyphs" text-anchor="middle">-20%</text>
<rect x="1314.00" y="559.4" width="1" height="221.0" fill="#eaeaea"/>
<text x="1314.50" y="794.00" font-size="11" fill="#777777" textLength="23.11" lengthAdjust="spacingAndGlyphs" text-anchor="middle">-10%</text>
<rect x="1500.10" y="559.4" width="1" height="221.0" fill="#eaeaea"/>
<text x="1500.60" y="794.00" font-size="11" fill="#777777" textLength="14.31" lengthAdjust="spacingAndGlyphs" text-anchor="middle">0%</text>
<text x="1267.00" y="811.50" font-size="11" fill="#777777" textLength="104.44" lengthAdjust="spacingAndGlyphs" text-anchor="middle">Total Sales Variance %</text>
<text transform="translate(807.3 670) rotate(-90)" font-size="11" fill="#777777" text-anchor="middle" textLength="64" lengthAdjust="spacingAndGlyphs">Avg $/Unit TY</text>
<clipPath id="plotclip"><rect x="846" y="559.9" width="822" height="222"/></clipPath>
<g clip-path="url(#plotclip)">
<circle cx="878.80" cy="665.20" r="14.85" fill="#2ca0bf" fill-opacity="0.85"/>
<circle cx="1395.00" cy="669.90" r="19.00" fill="#34629b" fill-opacity="0.85"/>
<circle cx="1466.55" cy="563.30" r="20.90" fill="#484a78" fill-opacity="0.85"/>
<circle cx="1299.05" cy="712.50" r="10.20" fill="#7e3b4a" fill-opacity="0.85"/>
<circle cx="1215.70" cy="721.80" r="7.95" fill="#2b5dc1" fill-opacity="0.85"/>
<circle cx="1500.10" cy="668.00" r="23.10" fill="#d91e2b" fill-opacity="0.85"/>
<circle cx="1485.60" cy="696.55" r="18.30" fill="#ea6417" fill-opacity="0.85"/>
<circle cx="1589.80" cy="717.85" r="19.30" fill="#edc515" fill-opacity="0.85"/>
<circle cx="1656.00" cy="703.90" r="13.00" fill="#dc6e1a" fill-opacity="0.85"/>
<circle cx="1545.45" cy="756.30" r="10.30" fill="#3f3899" fill-opacity="0.85"/>
</g>
<text x="899.00" y="668.80" font-size="10.5" fill="#666666" textLength="63.90" lengthAdjust="spacingAndGlyphs" stroke="#666666" stroke-width="0.25">010-Womens</text>
<text x="1395.00" y="701.70" font-size="10.5" fill="#666666" textLength="58.20" lengthAdjust="spacingAndGlyphs" text-anchor="middle" stroke="#666666" stroke-width="0.25">040-Juniors</text>
<text x="1466.60" y="596.80" font-size="10.5" fill="#666666" textLength="53.40" lengthAdjust="spacingAndGlyphs" text-anchor="middle" stroke="#666666" stroke-width="0.25">050-Shoes</text>
<text x="1298.95" y="735.90" font-size="10.5" fill="#666666" textLength="62.30" lengthAdjust="spacingAndGlyphs" text-anchor="middle" stroke="#666666" stroke-width="0.25">060-Intimate</text>
<text x="1215.80" y="741.80" font-size="10.5" fill="#666666" textLength="59.80" lengthAdjust="spacingAndGlyphs" text-anchor="middle" stroke="#666666" stroke-width="0.25">070-Hosiery</text>
<text x="1500.20" y="703.50" font-size="10.5" fill="#666666" textLength="47.90" lengthAdjust="spacingAndGlyphs" text-anchor="middle" stroke="#666666" stroke-width="0.25">020-Mens</text>
<text x="1485.90" y="726.80" font-size="10.5" fill="#666666" textLength="44.00" lengthAdjust="spacingAndGlyphs" text-anchor="middle" stroke="#666666" stroke-width="0.25">030-Kids</text>
<text x="1589.90" y="749.70" font-size="10.5" fill="#666666" textLength="50.80" lengthAdjust="spacingAndGlyphs" text-anchor="middle" stroke="#666666" stroke-width="0.25">090-Home</text>
<text x="1637.50" y="707.70" font-size="10.5" fill="#666666" textLength="81.00" lengthAdjust="spacingAndGlyphs" text-anchor="end" stroke="#666666" stroke-width="0.25">080-Accessories</text>
<text x="1530.30" y="759.80" font-size="10.5" fill="#666666" textLength="68.60" lengthAdjust="spacingAndGlyphs" text-anchor="end" stroke="#666666" stroke-width="0.25">100-Groceries</text>
</g>
<g id="watermark">
<g transform="translate(0.9 0.9)" opacity="0.6"><text x="1478.60" y="809.40" font-size="30" fill="#9c9c9c" textLength="84.50" lengthAdjust="spacingAndGlyphs">CSDN</text><text x="1573.00" y="809.40" font-size="27.5" fill="#9c9c9c" textLength="27.00" lengthAdjust="spacingAndGlyphs">@</text><text x="1598.20" y="811.20" font-size="33" fill="#9c9c9c" textLength="67.30" lengthAdjust="spacingAndGlyphs">析道</text></g>
<g transform="translate(-0.6 -0.6)" opacity="0.7"><text x="1478.60" y="809.40" font-size="30" fill="#ffffff" textLength="84.50" lengthAdjust="spacingAndGlyphs">CSDN</text><text x="1573.00" y="809.40" font-size="27.5" fill="#ffffff" textLength="27.00" lengthAdjust="spacingAndGlyphs">@</text><text x="1598.20" y="811.20" font-size="33" fill="#ffffff" textLength="67.30" lengthAdjust="spacingAndGlyphs">析道</text></g>
<g transform="translate(0 0)" opacity="0.85"><text x="1478.60" y="809.40" font-size="30" fill="#e4e4e4" textLength="84.50" lengthAdjust="spacingAndGlyphs">CSDN</text><text x="1573.00" y="809.40" font-size="27.5" fill="#e4e4e4" textLength="27.00" lengthAdjust="spacingAndGlyphs">@</text><text x="1598.20" y="811.20" font-size="33" fill="#e4e4e4" textLength="67.30" lengthAdjust="spacingAndGlyphs">析道</text></g>
</g>
</svg>
</body>
</html>
